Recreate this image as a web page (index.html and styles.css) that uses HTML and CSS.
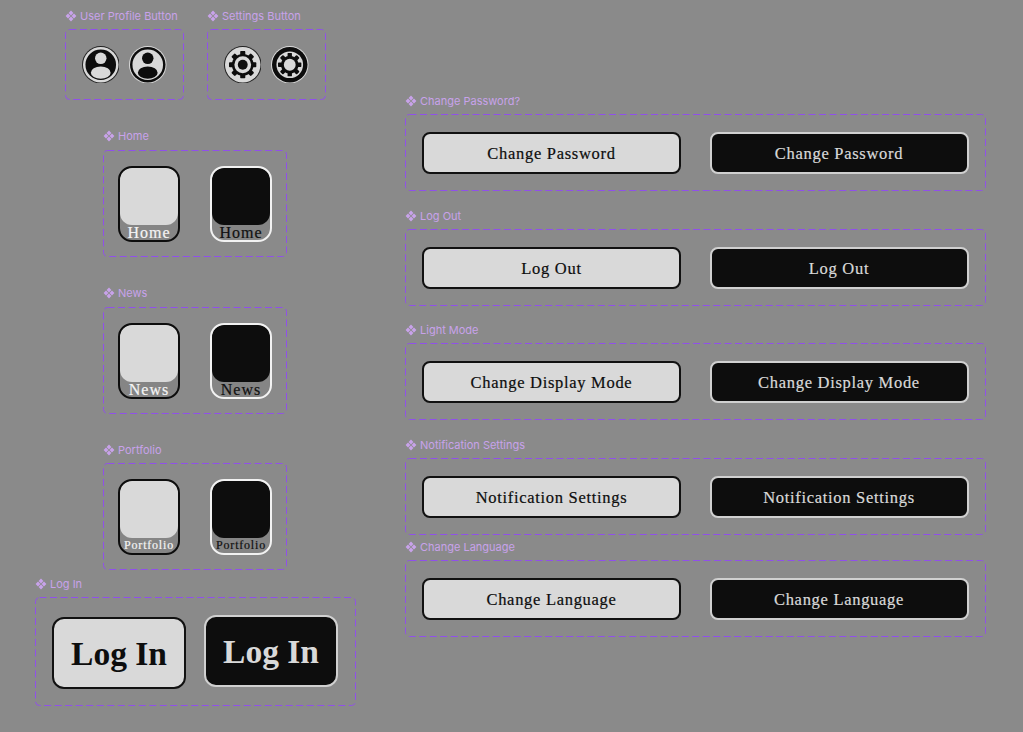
FILE: index.html
```html
<!DOCTYPE html>
<html lang="en">
<head>
  <meta charset="UTF-8" />
  <title>Button Components</title>
  <link rel="stylesheet" href="styles.css">
</head>
<body>
  <svg class="defs" width="0" height="0">
    <symbol id="mark" viewBox="0 0 12 12">
      <path d="M6 .5 8.400 3 6 5.400 3.600 3zM3 3.600 5.400 6 3 8.400.6 6zM9 3.600 11.400 6 9 8.400 6.600 6zM6 6.600 8.400 9 6 11.500 3.600 9z" />
    </symbol>
    <!-- one tooth per 45deg, top at y=0 of a 38 box, scaled down per icon -->
    <symbol id="teeth" viewBox="0 0 38 38">
      <g>
        <rect x="15.500" y="0" width="7" height="8" rx="1.500" />
        <rect x="15.500" y="0" width="7" height="8" rx="1.500" transform="rotate(45 19 19)" />
        <rect x="15.500" y="0" width="7" height="8" rx="1.500" transform="rotate(90 19 19)" />
        <rect x="15.500" y="0" width="7" height="8" rx="1.500" transform="rotate(135 19 19)" />
        <rect x="15.500" y="0" width="7" height="8" rx="1.500" transform="rotate(180 19 19)" />
        <rect x="15.500" y="0" width="7" height="8" rx="1.500" transform="rotate(225 19 19)" />
        <rect x="15.500" y="0" width="7" height="8" rx="1.500" transform="rotate(270 19 19)" />
        <rect x="15.500" y="0" width="7" height="8" rx="1.500" transform="rotate(315 19 19)" />
      </g>
    </symbol>
  </svg>

  <main class="canvas">
    <section class="group group-profile">
      <h2 class="group-label"><svg class="mark"><use href="#mark" /></svg>User Profile Button</h2>
      <div class="set set-icons">
        <svg class="dash"><rect /></svg>
        <svg class="icon icon-light" viewBox="0 0 38 38">
          <circle class="edge" cx="19" cy="19" r="19" />
          <circle class="ring" cx="19" cy="19" r="18" />
          <circle class="core" cx="19" cy="19" r="15.500" />
          <circle class="fill" cx="19" cy="12.500" r="5.800" />
          <ellipse class="fill" cx="19" cy="27" rx="10" ry="6.300" />
        </svg>
        <svg class="icon icon-dark" viewBox="0 0 38 38">
          <circle class="edge" cx="19" cy="19" r="19" />
          <circle class="ring" cx="19" cy="19" r="18" />
          <circle class="core" cx="19" cy="19" r="15.500" />
          <circle class="fill" cx="19" cy="12.500" r="5.800" />
          <ellipse class="fill" cx="19" cy="27" rx="10" ry="6.300" />
        </svg>
      </div>
    </section>

    <section class="group group-settings">
      <h2 class="group-label"><svg class="mark"><use href="#mark" /></svg>Settings Button</h2>
      <div class="set set-icons">
        <svg class="dash"><rect /></svg>
        <svg class="icon icon-light" viewBox="0 0 38 38">
          <circle class="edge" cx="19" cy="19" r="19" />
          <circle class="core" cx="19" cy="19" r="18" />
          <use class="fill" href="#teeth" x="5" y="5" width="28" height="28" />
          <circle class="fill" cx="19" cy="19" r="11" />
          <circle class="core" cx="19" cy="19" r="8.500" />
          <circle class="fill" cx="19" cy="19" r="5" />
        </svg>
        <svg class="icon icon-dark" viewBox="0 0 38 38">
          <circle class="edge" cx="19" cy="19" r="19" />
          <circle class="ring" cx="19" cy="19" r="18" />
          <circle class="core" cx="19" cy="19" r="13.500" />
          <use class="fill" href="#teeth" x="7" y="7" width="24" height="24" />
          <circle class="fill" cx="19" cy="19" r="9" />
          <circle class="core" cx="19" cy="19" r="6" />
        </svg>
      </div>
    </section>

    <section class="group group-home">
      <h2 class="group-label"><svg class="mark"><use href="#mark" /></svg>Home</h2>
      <div class="set set-tiles">
        <svg class="dash"><rect /></svg>
        <div class="tile tile-light"><div class="tile-face"></div><span class="tile-name">Home</span></div>
        <div class="tile tile-dark"><div class="tile-face"></div><span class="tile-name">Home</span></div>
      </div>
    </section>

    <section class="group group-news">
      <h2 class="group-label"><svg class="mark"><use href="#mark" /></svg>News</h2>
      <div class="set set-tiles">
        <svg class="dash"><rect /></svg>
        <div class="tile tile-light"><div class="tile-face"></div><span class="tile-name">News</span></div>
        <div class="tile tile-dark"><div class="tile-face"></div><span class="tile-name">News</span></div>
      </div>
    </section>

    <section class="group group-portfolio">
      <h2 class="group-label"><svg class="mark"><use href="#mark" /></svg>Portfolio</h2>
      <div class="set set-tiles">
        <svg class="dash"><rect /></svg>
        <div class="tile tile-light"><div class="tile-face"></div><span class="tile-name tile-name-small">Portfolio</span></div>
        <div class="tile tile-dark"><div class="tile-face"></div><span class="tile-name tile-name-small">Portfolio</span></div>
      </div>
    </section>

    <section class="group group-login">
      <h2 class="group-label"><svg class="mark"><use href="#mark" /></svg>Log In</h2>
      <div class="set set-login">
        <svg class="dash"><rect /></svg>
        <button class="login login-light">Log In</button>
        <button class="login login-dark">Log In</button>
      </div>
    </section>

    <section class="group group-password">
      <h2 class="group-label"><svg class="mark"><use href="#mark" /></svg>Change Password?</h2>
      <div class="set set-wide">
        <svg class="dash"><rect /></svg>
        <button class="wide wide-light">Change Password</button>
        <button class="wide wide-dark">Change Password</button>
      </div>
    </section>

    <section class="group group-logout">
      <h2 class="group-label"><svg class="mark"><use href="#mark" /></svg>Log Out</h2>
      <div class="set set-wide">
        <svg class="dash"><rect /></svg>
        <button class="wide wide-light">Log Out</button>
        <button class="wide wide-dark">Log Out</button>
      </div>
    </section>

    <section class="group group-mode">
      <h2 class="group-label"><svg class="mark"><use href="#mark" /></svg>Light Mode</h2>
      <div class="set set-wide">
        <svg class="dash"><rect /></svg>
        <button class="wide wide-light">Change Display Mode</button>
        <button class="wide wide-dark">Change Display Mode</button>
      </div>
    </section>

    <section class="group group-notify">
      <h2 class="group-label"><svg class="mark"><use href="#mark" /></svg>Notification Settings</h2>
      <div class="set set-wide">
        <svg class="dash"><rect /></svg>
        <button class="wide wide-light">Notification Settings</button>
        <button class="wide wide-dark">Notification Settings</button>
      </div>
    </section>

    <section class="group group-language">
      <h2 class="group-label"><svg class="mark"><use href="#mark" /></svg>Change Language</h2>
      <div class="set set-wide">
        <svg class="dash"><rect /></svg>
        <button class="wide wide-light">Change Language</button>
        <button class="wide wide-dark">Change Language</button>
      </div>
    </section>
  </main>
</body>
</html>
```

FILE: styles.css
```css
* {
  box-sizing: border-box;
}
html, body {
  margin: 0;
  height: 100%;
}
body {
  background: #8a8a8a;
  overflow: hidden;
}
.defs {
  position: absolute;
}
.canvas {
  position: relative;
  width: 1023px;
  height: 732px;
}

/* each component set sits at its own spot on the canvas */
.group {
  position: absolute;
}
.group-profile { left: 65px; top: 9px; width: 119px; }
.group-settings { left: 207px; top: 9px; width: 119px; }
.group-home { left: 103px; top: 129px; width: 184px; }
.group-news { left: 103px; top: 286px; width: 184px; }
.group-portfolio { left: 103px; top: 443px; width: 184px; }
.group-login { left: 35px; top: 577px; width: 321px; }
.group-password { left: 405px; top: 94px; width: 581px; }
.group-logout { left: 405px; top: 209px; width: 581px; }
.group-mode { left: 405px; top: 323px; width: 581px; }
.group-notify { left: 405px; top: 438px; width: 581px; }
.group-language { left: 405px; top: 540px; width: 581px; }

.group-label {
  display: flex;
  align-items: center;
  gap: 3px;
  height: 14px;
  margin: 0 0 6px;
  font-family: Inter, sans-serif;
  font-size: 11px;
  font-weight: 400;
  line-height: 14px;
  color: #c8a2ea;
  white-space: nowrap;
}
.group-home .group-label,
.group-news .group-label {
  margin-bottom: 7px;
}
.mark {
  width: 12px;
  height: 12px;
  fill: #c8a2ea;
}
.set {
  position: relative;
}
/* figma style dashed frame, css dashed is too short */
.dash {
  position: absolute;
  left: 0;
  top: 0;
  width: 100%;
  height: 100%;
  pointer-events: none;
}
.dash rect {
  x: .5px;
  y: .5px;
  width: calc(100% - 1px);
  height: calc(100% - 1px);
  rx: 4px;
  fill: none;
  stroke: #9050ea;
  stroke-width: 1;
  stroke-dasharray: 7 3.500;
}

/* round icon buttons */
.set-icons {
  display: flex;
  align-items: center;
  gap: 10px;
  height: 71px;
  padding-left: 16.500px;
}
.icon {
  width: 37.500px;
  height: 37.500px;
}
.icon-light .edge { fill: #222222; }
.icon-light .ring { fill: #d9d9d9; }
.icon-light .core { fill: #0d0d0d; }
.icon-light .fill { fill: #d9d9d9; }
.group-settings .icon-light .core { fill: #d9d9d9; }
.group-settings .icon-light .fill { fill: #0d0d0d; }
.icon-dark .edge { fill: #d9d9d9; }
.icon-dark .ring { fill: #0d0d0d; }
.icon-dark .core { fill: #d9d9d9; }
.icon-dark .fill { fill: #0d0d0d; }

/* nav tiles */
.set-tiles {
  display: flex;
  gap: 30px;
  height: 107px;
  padding: 16px 0 0 15px;
}
.tile {
  display: flex;
  flex-direction: column;
  align-items: center;
  width: 62px;
  height: 76px;
  border: 2px solid #0d0d0d;
  border-radius: 14px;
  overflow: hidden;
  background: #858585;
}
.tile-dark {
  border-color: #f2f2f2;
}
.tile-face {
  flex: none;
  width: 100%;
  height: 57px;
  border-radius: 12px;
  background: #d9d9d9;
}
.tile-dark .tile-face {
  background: #0d0d0d;
}
.tile-name {
  font-family: "Liberation Serif", serif;
  font-size: 16px;
  line-height: 15px;
  letter-spacing: 1px;
  color: #f4f4f4;
  white-space: nowrap;
  -webkit-text-stroke: .2px currentColor;
}
.tile-dark .tile-name {
  color: #111111;
}
.tile-name-small {
  font-size: 12px;
  letter-spacing: .8px;
}

/* log in */
.set-login {
  display: flex;
  align-items: flex-start;
  gap: 18px;
  height: 109px;
  padding: 20px 0 0 17px;
}
.login {
  width: 134px;
  height: 72px;
  padding: 2px 0 0;
  border: 2px solid #111111;
  border-radius: 12px;
  background: #d9d9d9;
  font-family: "Liberation Serif", serif;
  font-size: 33.500px;
  font-weight: 700;
  color: #0d0d0d;
}
.login-dark {
  margin-top: -2px;
  border-color: #d0d0d0;
  background: #0d0d0d;
  color: #d9d9d9;
}

/* wide text buttons */
.set-wide {
  display: flex;
  gap: 28.500px;
  height: 77px;
  padding: 18px 0 0 17px;
}
.wide {
  width: 259px;
  height: 42px;
  padding: 1px 0 0;
  border: 2px solid #111111;
  border-radius: 8px;
  background: #d9d9d9;
  font-family: "Liberation Serif", serif;
  font-size: 16.500px;
  letter-spacing: .7px;
  color: #0d0d0d;
  -webkit-text-stroke: .2px currentColor;
}
.wide-dark {
  border-color: #d0d0d0;
  background: #0d0d0d;
  color: #d9d9d9;
}
```
